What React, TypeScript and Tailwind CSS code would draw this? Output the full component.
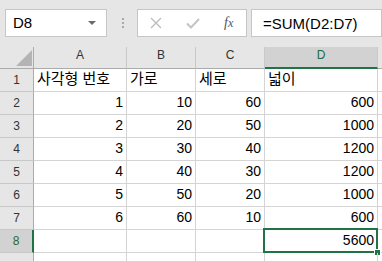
import React from "react";

const widths = ["w-[93px]", "w-[69px]", "w-[69px]", "w-[113px]"];
const letters = ["A", "B", "C", "D"];

const data: (string | number)[][] = [
  ["사각형 번호", "가로", "세로", "넓이"],
  [1, 10, 60, 600],
  [2, 20, 50, 1000],
  [3, 30, 40, 1200],
  [4, 40, 30, 1200],
  [5, 50, 20, 1000],
  [6, 60, 10, 600],
  ["", "", "", 5600],
  ["", "", "", ""],
];

function Corner() {
  return (
    <div className="w-[34px] h-[22px] shrink-0 border-r border-b border-r-[#ababab] border-b-[#ababab] bg-[#e6e6e6] flex items-end justify-end pr-[1px] pb-[2px]">
      <svg width="16" height="16" viewBox="0 0 16 16">
        <polygon points="16,0 16,16 0,16" fill="#b4b4b4" />
      </svg>
    </div>
  );
}

export default function App() {
  return (
    <div className="w-[382px] h-[261px] overflow-hidden bg-white font-['Liberation_Sans','Noto_Sans_CJK_KR',sans-serif] text-black">
      {/* toolbar */}
      <div className="h-[47px] bg-[#e6e6e6] flex items-start pt-[9px] pl-[5px]">
        <div className="w-[102px] h-[28px] bg-white border border-[#c6c6c6] flex items-center pl-[7px] pr-[10px] text-[15px] leading-[26px]">
          <span>D8</span>
          <svg className="ml-auto" width="8" height="4" viewBox="0 0 8 4">
            <polygon points="0,0 8,0 4,4" fill="#6b6b6b" />
          </svg>
        </div>
        <div className="w-[30px] h-[28px] flex flex-col items-center justify-center gap-[2px] pl-[1px]">
          <div className="w-[2px] h-[2px] bg-[#a8a8a8]" />
          <div className="w-[2px] h-[2px] bg-[#a8a8a8]" />
          <div className="w-[2px] h-[2px] bg-[#a8a8a8]" />
        </div>
        <div className="w-[110px] h-[28px] bg-white border border-[#c6c6c6] flex items-center pl-[12px]">
          <svg width="12" height="12" viewBox="0 0 12 12">
            <path d="M1 1 L11 11 M11 1 L1 11" stroke="#bdbdbd" strokeWidth="1.4" fill="none" />
          </svg>
          <svg className="ml-[24px]" width="14" height="11" viewBox="0 0 14 11">
            <path d="M1 5.5 L5 9.5 L13 1" stroke="#c4c4c4" strokeWidth="2" fill="none" />
          </svg>
          <span className="ml-[24px] font-['Liberation_Serif',serif] italic text-[14px] leading-[14px] text-[#555]">
            f<span className="text-[12px]">x</span>
          </span>
        </div>
        <div className="ml-[4px] flex-1 h-[28px] bg-white border border-[#c6c6c6] flex items-center pl-[11px] pt-[1px] text-[15px] leading-[26px]">
          =SUM(D2:D7)
        </div>
      </div>

      {/* column header row */}
      <div className="flex h-[22px]">
        <Corner />
        {letters.map((l, i) => {
          const sel = l === "D";
          return (
            <div
              key={l}
              className={
                widths[i] +
                " shrink-0 h-[22px] flex justify-center text-[12px] leading-[16px] " +
                (sel
                  ? "bg-[#d2d2d2] border-b-2 border-b-[#217346] border-r border-r-[#c8c8c8] text-[#1e6b41]"
                  : "bg-[#e6e6e6] border-b border-b-[#ababab] border-r border-r-[#c8c8c8] text-[#333]")
              }
            >
              {l}
            </div>
          );
        })}
        <div className="flex-1 h-[22px] bg-[#e6e6e6] border-b border-b-[#ababab]" />
      </div>

      {/* data rows */}
      {data.map((row, r) => {
        const rowNum = r + 1;
        const selRow = rowNum === 8;
        return (
          <div key={r} className="flex h-[23px]">
            <div
              className={
                "w-[34px] shrink-0 h-[23px] flex justify-center text-[12px] leading-[22px] border-b border-b-[#c8c8c8] " +
                (selRow
                  ? "bg-[#d2d2d2] border-r-2 border-r-[#217346] text-[#1e6b41]"
                  : "bg-[#e6e6e6] border-r border-r-[#ababab] text-[#333]")
              }
            >
              {rowNum < 9 ? rowNum : ""}
            </div>
            {row.map((v, c) => {
              const isText = typeof v === "string" && r === 0;
              const selCell = rowNum === 8 && c === 3;
              return (
                <div
                  key={c}
                  className={
                    widths[c] +
                    " shrink-0 h-[23px] border-r border-b border-[#d4d4d4] relative flex " +
                    (isText
                      ? "justify-start pl-[3px] text-[15px] leading-[19px]"
                      : "justify-end pr-[3px] text-[14px] leading-[20px]")
                  }
                >
                  <span className="whitespace-nowrap">{v}</span>
                  {selCell && (
                    <>
                      <div className="absolute -left-[2px] -top-[2px] -right-[1px] -bottom-[1px] border-2 border-[#217346]" />
                      <div className="absolute -right-[4px] -bottom-[4px] w-[7px] h-[7px] bg-[#217346] border border-white" />
                    </>
                  )}
                </div>
              );
            })}
            <div className="flex-1 h-[23px] border-b border-[#d4d4d4]" />
          </div>
        );
      })}
    </div>
  );
}
